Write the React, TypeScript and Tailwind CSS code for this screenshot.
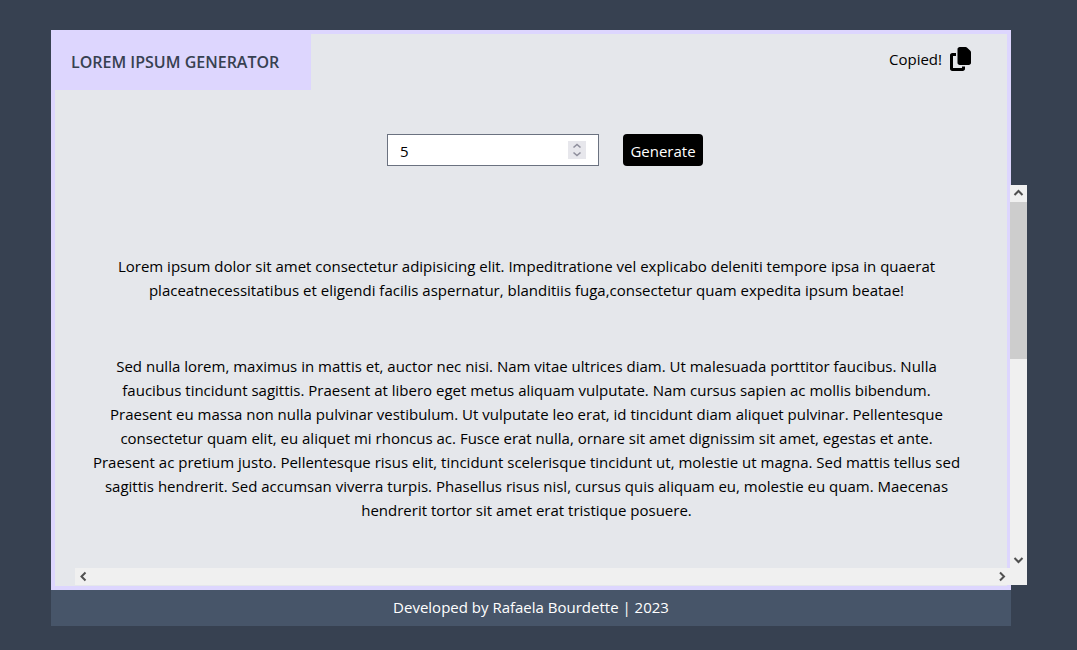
import { useState } from "react";

const paragraphs: string[][] = [
  [
    "Lorem ipsum dolor sit amet consectetur adipisicing elit. Impeditratione vel explicabo deleniti tempore ipsa in quaerat",
    "placeatnecessitatibus et eligendi facilis aspernatur, blanditiis fuga,consectetur quam expedita ipsum beatae!",
  ],
  [
    "Sed nulla lorem, maximus in mattis et, auctor nec nisi. Nam vitae ultrices diam. Ut malesuada porttitor faucibus. Nulla",
    "faucibus tincidunt sagittis. Praesent at libero eget metus aliquam vulputate. Nam cursus sapien ac mollis bibendum.",
    "Praesent eu massa non nulla pulvinar vestibulum. Ut vulputate leo erat, id tincidunt diam aliquet pulvinar. Pellentesque",
    "consectetur quam elit, eu aliquet mi rhoncus ac. Fusce erat nulla, ornare sit amet dignissim sit amet, egestas et ante.",
    "Praesent ac pretium justo. Pellentesque risus elit, tincidunt scelerisque tincidunt ut, molestie ut magna. Sed mattis tellus sed",
    "sagittis hendrerit. Sed accumsan viverra turpis. Phasellus risus nisl, cursus quis aliquam eu, molestie eu quam. Maecenas",
    "hendrerit tortor sit amet erat tristique posuere.",
  ],
];

const arrowPaths = {
  up: "M4.5 10l4-4 4 4",
  down: "M4.5 7l4 4 4-4",
  left: "M10.5 4.5l-4 4 4 4",
  right: "M7 4.5l4 4-4 4",
};

function ScrollArrow({ direction }: { direction: keyof typeof arrowPaths }) {
  return (
    <button type="button" tabIndex={-1} aria-label={`Scroll ${direction}`} className="size-[17px] shrink-0">
      <svg viewBox="0 0 17 17" className="size-[17px]" fill="none" stroke="#505050" strokeWidth="2">
        <path d={arrowPaths[direction]} />
      </svg>
    </button>
  );
}

function CopyIcon() {
  return (
    <svg viewBox="0 0 448 512" className="h-6 w-[21px]" fill="currentColor" aria-hidden="true">
      <path d="M208 0H332.1c12.7 0 24.9 5.1 33.9 14.1l67.9 67.9c9 9 14.1 21.2 14.1 33.9V336c0 26.5-21.5 48-48 48H208c-26.5 0-48-21.5-48-48V48c0-26.5 21.5-48 48-48zM48 128h80v64H64V448H256V416h64v48c0 26.5-21.5 48-48 48H48c-26.5 0-48-21.5-48-48V176c0-26.5 21.5-48 48-48z" />
    </svg>
  );
}

export default function App() {
  const [count, setCount] = useState(5);

  return (
    <div className="min-h-screen bg-[#374151] pt-[30px] pr-[15px] pb-6 font-['Open_Sans','Noto_Sans',sans-serif] text-[15px] leading-6 text-black">
      <div className="mx-auto max-w-[960px]">
        <main className="border-4 border-[#ddd6fe] bg-[#e5e7eb] pb-px">
          <header className="flex items-start justify-between">
            <h1 className="w-64 bg-[#ddd6fe] py-4 pl-4 text-[16px] leading-6 font-semibold text-[#374151]">
              LOREM IPSUM GENERATOR
            </h1>
            <div className="mt-[13px] mr-9 flex items-center gap-2">
              <span>Copied!</span>
              <button type="button" aria-label="Copy text">
                <CopyIcon />
              </button>
            </div>
          </header>

          <form className="mt-11 flex justify-center gap-6 pl-7" onSubmit={(e) => e.preventDefault()}>
            <div className="relative">
              <input
                type="number"
                aria-label="Number of paragraphs"
                value={count}
                onChange={(e) => setCount(Number(e.target.value))}
                className="block h-8 w-[212px] appearance-none border border-[#6b7280] bg-white px-3 pt-0.5 [appearance:textfield] [&::-webkit-inner-spin-button]:appearance-none"
              />
              <div className="absolute top-[7px] right-[13px] flex size-[18px] flex-col bg-[#e7e7ec] text-[#8f8f9d]">
                <button type="button" aria-label="Increase" onClick={() => setCount(count + 1)}>
                  <svg viewBox="0 0 18 9" className="h-[9px] w-[18px]" fill="none" stroke="currentColor" strokeWidth="1.6">
                    <path d="M5.5 6.5 9 3.5l3.5 3" />
                  </svg>
                </button>
                <button type="button" aria-label="Decrease" onClick={() => setCount(count - 1)}>
                  <svg viewBox="0 0 18 9" className="h-[9px] w-[18px]" fill="none" stroke="currentColor" strokeWidth="1.6">
                    <path d="M5.5 2.5 9 5.5l3.5-3" />
                  </svg>
                </button>
              </div>
            </div>
            <button type="submit" className="h-8 w-20 rounded bg-black pt-0.5 text-white">
              Generate
            </button>
          </form>

          <section className="mt-[19px] ml-5 grid h-[400px] w-full grid-cols-[1fr_17px] grid-rows-[1fr_17px]">
            <div className="flex flex-col gap-[52px] overflow-hidden pt-[69px] pr-8 text-center whitespace-nowrap">
              {paragraphs.map((lines) => (
                <p key={lines[0]}>
                  {lines.map((line) => (
                    <span key={line} className="block">
                      {line}{" "}
                    </span>
                  ))}
                </p>
              ))}
            </div>
            <div className="flex flex-col bg-[#f0f0f0]">
              <ScrollArrow direction="up" />
              <div className="flex-1">
                <div className="h-[157px] bg-[#cdcdcd]" />
              </div>
              <ScrollArrow direction="down" />
            </div>
            <div className="flex justify-between bg-[#f0f0f0]">
              <ScrollArrow direction="left" />
              <ScrollArrow direction="right" />
            </div>
            <div className="bg-[#f0f0f0]" />
          </section>
        </main>
        <footer className="bg-[#475569] pt-[5px] pb-[7px] text-center text-white">
          Developed by Rafaela Bourdette | 2023
        </footer>
      </div>
    </div>
  );
}
